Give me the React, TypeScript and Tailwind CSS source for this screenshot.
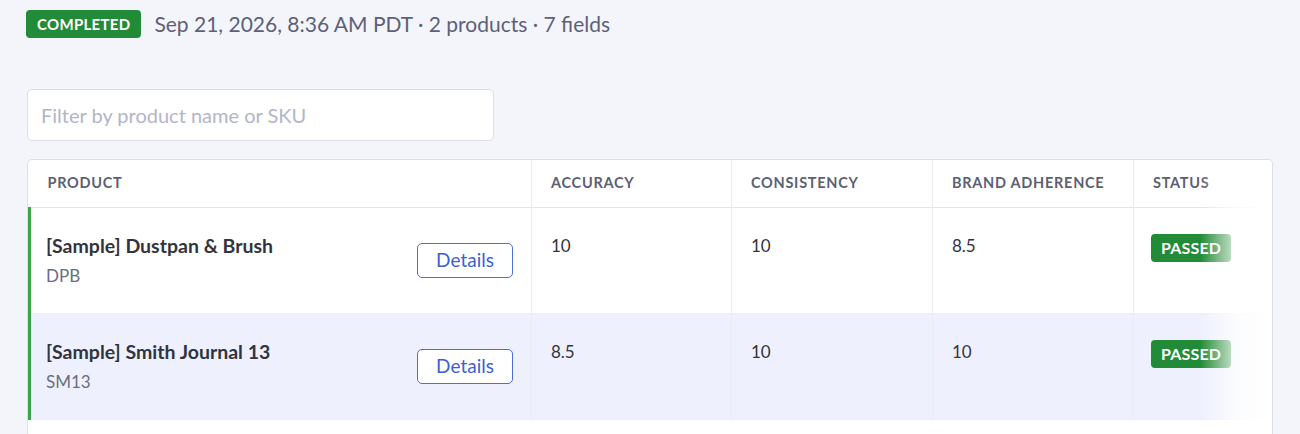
import React from "react";

const rows = [
  { name: "[Sample] Dustpan & Brush", sku: "DPB", accuracy: "10", consistency: "10", brand: "8.5", highlight: false },
  { name: "[Sample] Smith Journal 13", sku: "SM13", accuracy: "8.5", consistency: "10", brand: "10", highlight: true },
];

export default function App() {
  return (
    <div
      className="min-h-[434px] bg-[#f4f5fa] px-[27px] pt-[10px]"
      style={{ fontFamily: "Lato, 'Noto Sans', sans-serif" }}
    >
      <div className="flex h-[28px] items-center gap-[13px]">
        <span className="-ml-[1px] inline-flex h-[28px] items-center rounded-[4px] bg-[#228b37] px-[11px] text-[15px] font-bold uppercase tracking-[0.02em] text-white">
          Completed
        </span>
        <span className="text-[21px] leading-[28px] text-[#5e6078]">
          Sep 21, 2026, 8:36 AM PDT · 2 products · 7 fields
        </span>
      </div>

      <input
        placeholder="Filter by product name or SKU"
        className="mt-[51px] block h-[52px] w-[467px] rounded-[5px] border border-[#dcdee8] bg-white px-[13px] text-[20px] text-[#313440] placeholder:text-[#b2b5c8] outline-none"
      />

      <div className="relative mt-[18px] w-[1246px] overflow-hidden rounded-t-[5px] border border-b-0 border-[#dcdee8] bg-white">
        <table className="w-full table-fixed border-collapse text-left">
          <colgroup>
            <col className="w-[502px]" />
            <col className="w-[200px]" />
            <col className="w-[201px]" />
            <col className="w-[201px]" />
            <col />
          </colgroup>
          <thead>
            <tr className="h-[47px] border-b border-[#e3e4ec] text-[14.5px] font-bold uppercase tracking-[0.05em] text-[#5d5f73]">
              <th className="pl-[18px] font-bold">Product</th>
              <th className="border-l border-[#ebecf2] pl-[19px] font-bold">Accuracy</th>
              <th className="border-l border-[#ebecf2] pl-[19px] font-bold">Consistency</th>
              <th className="border-l border-[#ebecf2] pl-[19px] font-bold">Brand Adherence</th>
              <th className="border-l border-[#ebecf2] pl-[19px] font-bold">Status</th>
            </tr>
          </thead>
          <tbody>
            {rows.map((r) => (
              <tr
                key={r.sku}
                className={`h-[106px] border-b border-[#eceef6] align-top ${r.highlight ? "bg-[#eef1fd]" : "bg-white"}`}
              >
                <td className="border-l-[3px] border-[#38a846] pl-[15px] pt-[25px]">
                  <div className="flex items-start justify-between pr-[18px]">
                    <div>
                      <div className="text-[19.5px] font-bold leading-[25px] text-[#313440]">{r.name}</div>
                      <div className="mt-[7px] text-[17px] leading-[22px] text-[#6b6d82]">{r.sku}</div>
                    </div>
                    <button className="mt-[10px] h-[35px] w-[96px] rounded-[5px] border border-[#4d6ddb] bg-white text-[19px] text-[#3d5fd2]">
                      Details
                    </button>
                  </div>
                </td>
                <td className="border-l border-[#ebecf2] pl-[19px] pt-[26px] text-[17px] leading-[24px] text-[#313440]">{r.accuracy}</td>
                <td className="border-l border-[#ebecf2] pl-[19px] pt-[26px] text-[17px] leading-[24px] text-[#313440]">{r.consistency}</td>
                <td className="border-l border-[#ebecf2] pl-[19px] pt-[26px] text-[17px] leading-[24px] text-[#313440]">{r.brand}</td>
                <td className="border-l border-[#ebecf2] pl-[17px] pt-[26px]">
                  <span className="inline-flex h-[28px] items-center rounded-[4px] bg-[#228b37] px-[10px] text-[16px] font-bold uppercase tracking-[0.01em] text-white">
                    Passed
                  </span>
                </td>
              </tr>
            ))}
          </tbody>
        </table>
        <div className="h-[20px]" />
        <div className="pointer-events-none absolute inset-y-0 right-0 w-[72px] bg-gradient-to-r from-white/0 via-white/80 to-white" />
      </div>
    </div>
  );
}
